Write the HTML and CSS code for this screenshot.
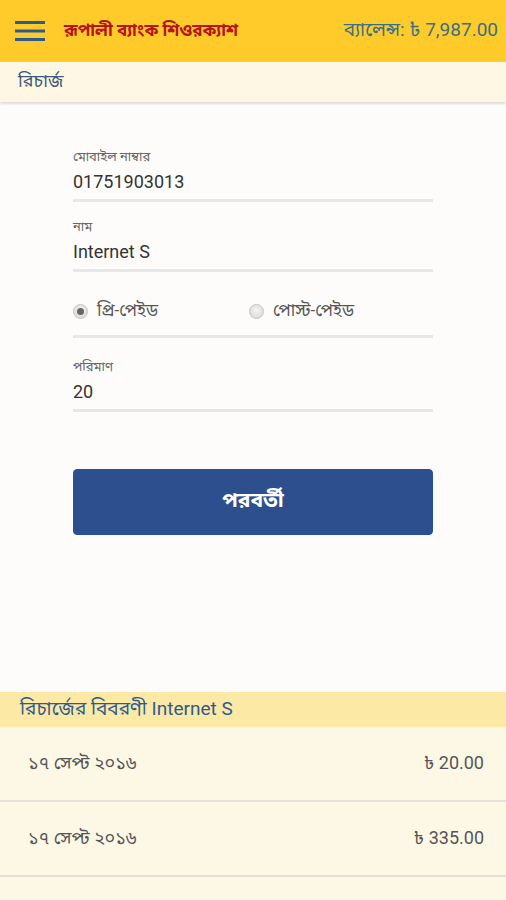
FILE: index.html
```html
<!DOCTYPE html>
<html lang="bn">

<head>
<meta charset="UTF-8">
<meta name="viewport" content="width=device-width, initial-scale=1.0">
<title>রিচার্জ</title>
<link rel="stylesheet" href="styles.css">
</head>

<body>

<header class="topbar">
    <svg class="menu" width="30" height="22" viewBox="0 0 30 22">
        <rect x="0" y="1" width="30" height="3" fill="#2d5a8c"></rect>
        <rect x="0" y="9.5" width="30" height="3" fill="#2d5a8c"></rect>
        <rect x="0" y="18" width="30" height="3" fill="#2d5a8c"></rect>
    </svg>
    <span class="brand">রূপালী ব্যাংক শিওরক্যাশ</span>
    <span class="balance">ব্যালেন্স: ৳ 7,987.00</span>
</header>

<div class="subbar">রিচার্জ</div>

<form class="form" id="rechargeForm">
    <div class="field">
        <label>মোবাইল নাম্বার</label>
        <div class="value">01751903013</div>
    </div>
    <div class="field">
        <label>নাম</label>
        <div class="value">Internet S</div>
    </div>
    <div class="field radios">
        <span class="radio"><span class="dot checked"></span>প্রি-পেইড</span>
        <span class="radio"><span class="dot"></span>পোস্ট-পেইড</span>
    </div>
    <div class="field">
        <label>পরিমাণ</label>
        <div class="value">20</div>
    </div>
    <button type="button" class="next">পরবর্তী</button>
</form>

<section class="history">
    <h3>রিচার্জের বিবরণী Internet S</h3>
    <div class="row"><span>১৭ সেপ্ট ২০১৬</span><span>৳ 20.00</span></div>
    <div class="row"><span>১৭ সেপ্ট ২০১৬</span><span>৳ 335.00</span></div>
    <div class="row"></div>
</section>

</body>
</html>
```

FILE: styles.css
```css
body { margin: 0; background-color: #fdfcfa; font-family: Roboto, "Noto Sans Bengali", "Noto Sans", sans-serif; color: #333; height: 900px; overflow: hidden; }

.topbar { height: 62px; background-color: #fecb2a; display: flex; align-items: center; padding: 0 8px 0 15px; }
.menu { margin-right: 19px; }
.brand { color: #b8141c; font-size: 17px; font-weight: bold; }
.balance { margin-left: auto; color: #3b6f86; font-size: 19px; }

.subbar { height: 40px; background-color: #fdf7e4; color: #3c5877; font-size: 18px; padding-left: 18px; line-height: 38px; box-shadow: 0 2px 2px rgba(0,0,0,0.12); }

.form { width: 360px; margin: 0 auto; padding-top: 45px; height: 590px; box-sizing: border-box; }
.field { border-bottom: 3px solid #e7e7e7; padding-bottom: 2px; margin-bottom: 15px; }
.field label { display: block; font-size: 13px; color: #666; line-height: 20px; }
.field .value { font-size: 18px; color: #333; line-height: 30px; }
.radios { display: flex; align-items: center; height: 48px; padding-bottom: 0; margin-bottom: 19px; }
.radio { display: flex; align-items: center; width: 176px; font-size: 17px; color: #555; }
.dot { width: 15px; height: 15px; border-radius: 50%; background: radial-gradient(circle at 50% 40%, #f4f4f4, #d4d4d4); border: 1px solid #c4c4c4; box-sizing: border-box; margin-right: 9px; position: relative; }
.dot.checked::after { content: ""; position: absolute; left: 3px; top: 3px; width: 7px; height: 7px; border-radius: 50%; background: #666; }

.next { display: block; width: 100%; height: 66px; margin-top: 57px; background-color: #2e4f8e; color: #fff; border: 1px solid #2550a8; border-radius: 4px; font-family: inherit; font-size: 21px; font-weight: bold; }

.history h3 { margin: 0; height: 35px; background-color: #fde9a6; color: #2f5b8c; font-size: 19px; font-weight: normal; padding-left: 20px; line-height: 33px; }
.row { height: 73px; background-color: #fdf8e6; border-bottom: 2px solid #e3e1da; display: flex; justify-content: space-between; align-items: center; padding: 0 22px 0 28px; font-size: 18px; color: #555; }
```
